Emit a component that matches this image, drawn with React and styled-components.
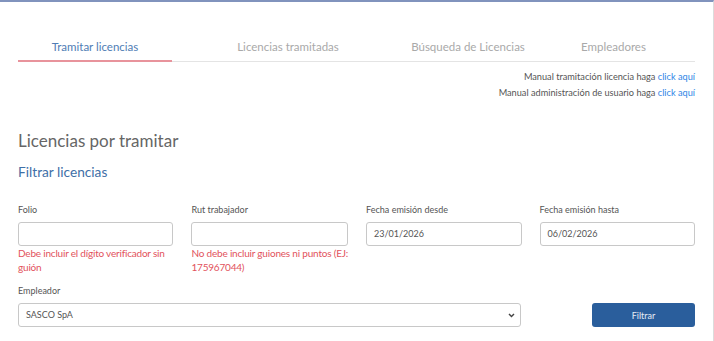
import React from 'react';
import styled, { createGlobalStyle } from 'styled-components';

const GlobalStyle = createGlobalStyle`
  html, body {
    margin: 0;
    padding: 0;
    background: #fff;
  }
  body {
    font-family: Lato, "Noto Sans", sans-serif;
    color: #555;
  }
`;

const Page = styled.div`
  box-sizing: border-box;
  width: 714px;
  height: 341px;
  border-top: 2px solid #8193bd;
  border-right: 1px solid #dcdcdc;
  padding: 0 18px;
  overflow: hidden;
`;

const Tabs = styled.nav`
  display: flex;
  margin-top: 32px;
  border-bottom: 1px solid #e4e4e4;
`;

const Tab = styled.div`
  width: ${(p) => p.$width}px;
  text-align: center;
  font-size: 11.5px;
  line-height: 14px;
  padding: 6px 0 6px;
  color: ${(p) => (p.$active ? '#4f7db5' : '#a9a9a9')};
  border-bottom: 2px solid ${(p) => (p.$active ? '#e8939c' : 'transparent')};
  margin-bottom: -1px;
`;

const Manuals = styled.div`
  margin-top: 7px;
  text-align: right;
  font-size: 9.2px;
  line-height: 16px;
  color: #555;
`;

const Link = styled.a`
  color: #2f86e6;
  text-decoration: none;
`;

const Title = styled.h1`
  margin: 28px 0 0;
  font-weight: 400;
  font-size: 17px;
  line-height: 24px;
  color: #666;
`;

const Subtitle = styled.h2`
  margin: 9px 0 0;
  font-weight: 400;
  font-size: 13.7px;
  line-height: 20px;
  color: #3f6fa7;
`;

const Grid = styled.div`
  display: grid;
  grid-template-columns: repeat(4, 1fr);
  column-gap: 18px;
  margin-top: ${(p) => p.$top}px;
  align-items: end;
`;

const Field = styled.div`
  grid-column: span ${(p) => p.$span || 1};
  align-self: start;
`;

const Label = styled.label`
  display: block;
  font-size: 9px;
  line-height: 14px;
  color: #555;
  margin-bottom: 5px;
`;

const Input = styled.div`
  box-sizing: border-box;
  height: 24px;
  border: 1px solid #c8c8c8;
  border-radius: 3px;
  padding: 0 5px 0 7px;
  font-size: 9px;
  line-height: 22px;
  color: #555;
  display: flex;
  align-items: center;
  justify-content: space-between;
`;

const Error = styled.div`
  font-size: 10px;
  line-height: 14px;
  letter-spacing: -0.2px;
  white-space: nowrap;
  color: #e2525c;
`;

const Button = styled.button`
  justify-self: end;
  width: 103px;
  height: 24px;
  border: none;
  border-radius: 3px;
  background: #2a5e9c;
  color: #e6ecf4;
  font-family: inherit;
  font-size: 9px;
`;

const Chevron = () => (
  <svg width="7" height="5" viewBox="0 0 7 5">
    <path d="M1 1 L3.5 3.6 L6 1" fill="none" stroke="#444" strokeWidth="1.4" />
  </svg>
);

export default function App() {
  return (
    <>
      <GlobalStyle />
      <Page>
        <Tabs>
          <Tab $width={154} $active>Tramitar licencias</Tab>
          <Tab $width={232}>Licencias tramitadas</Tab>
          <Tab $width={128}>Búsqueda de Licencias</Tab>
          <Tab $width={163}>Empleadores</Tab>
        </Tabs>
        <Manuals>
          <div>Manual tramitación licencia haga <Link href="#">click aquí</Link></div>
          <div>Manual administración de usuario haga <Link href="#">click aquí</Link></div>
        </Manuals>
        <Title>Licencias por tramitar</Title>
        <Subtitle>Filtrar licencias</Subtitle>
        <Grid $top={21}>
          <Field>
            <Label>Folio</Label>
            <Input />
            <Error>Debe incluir el dígito verificador sin<br />guión</Error>
          </Field>
          <Field>
            <Label>Rut trabajador</Label>
            <Input />
            <Error>No debe incluir guiones ni puntos (EJ:<br />175967044)</Error>
          </Field>
          <Field>
            <Label>Fecha emisión desde</Label>
            <Input>23/01/2026</Input>
          </Field>
          <Field>
            <Label>Fecha emisión hasta</Label>
            <Input>06/02/2026</Input>
          </Field>
        </Grid>
        <Grid $top={10}>
          <Field $span={3}>
            <Label>Empleador</Label>
            <Input>
              SASCO SpA
              <Chevron />
            </Input>
          </Field>
          <Button>Filtrar</Button>
        </Grid>
      </Page>
    </>
  );
}
